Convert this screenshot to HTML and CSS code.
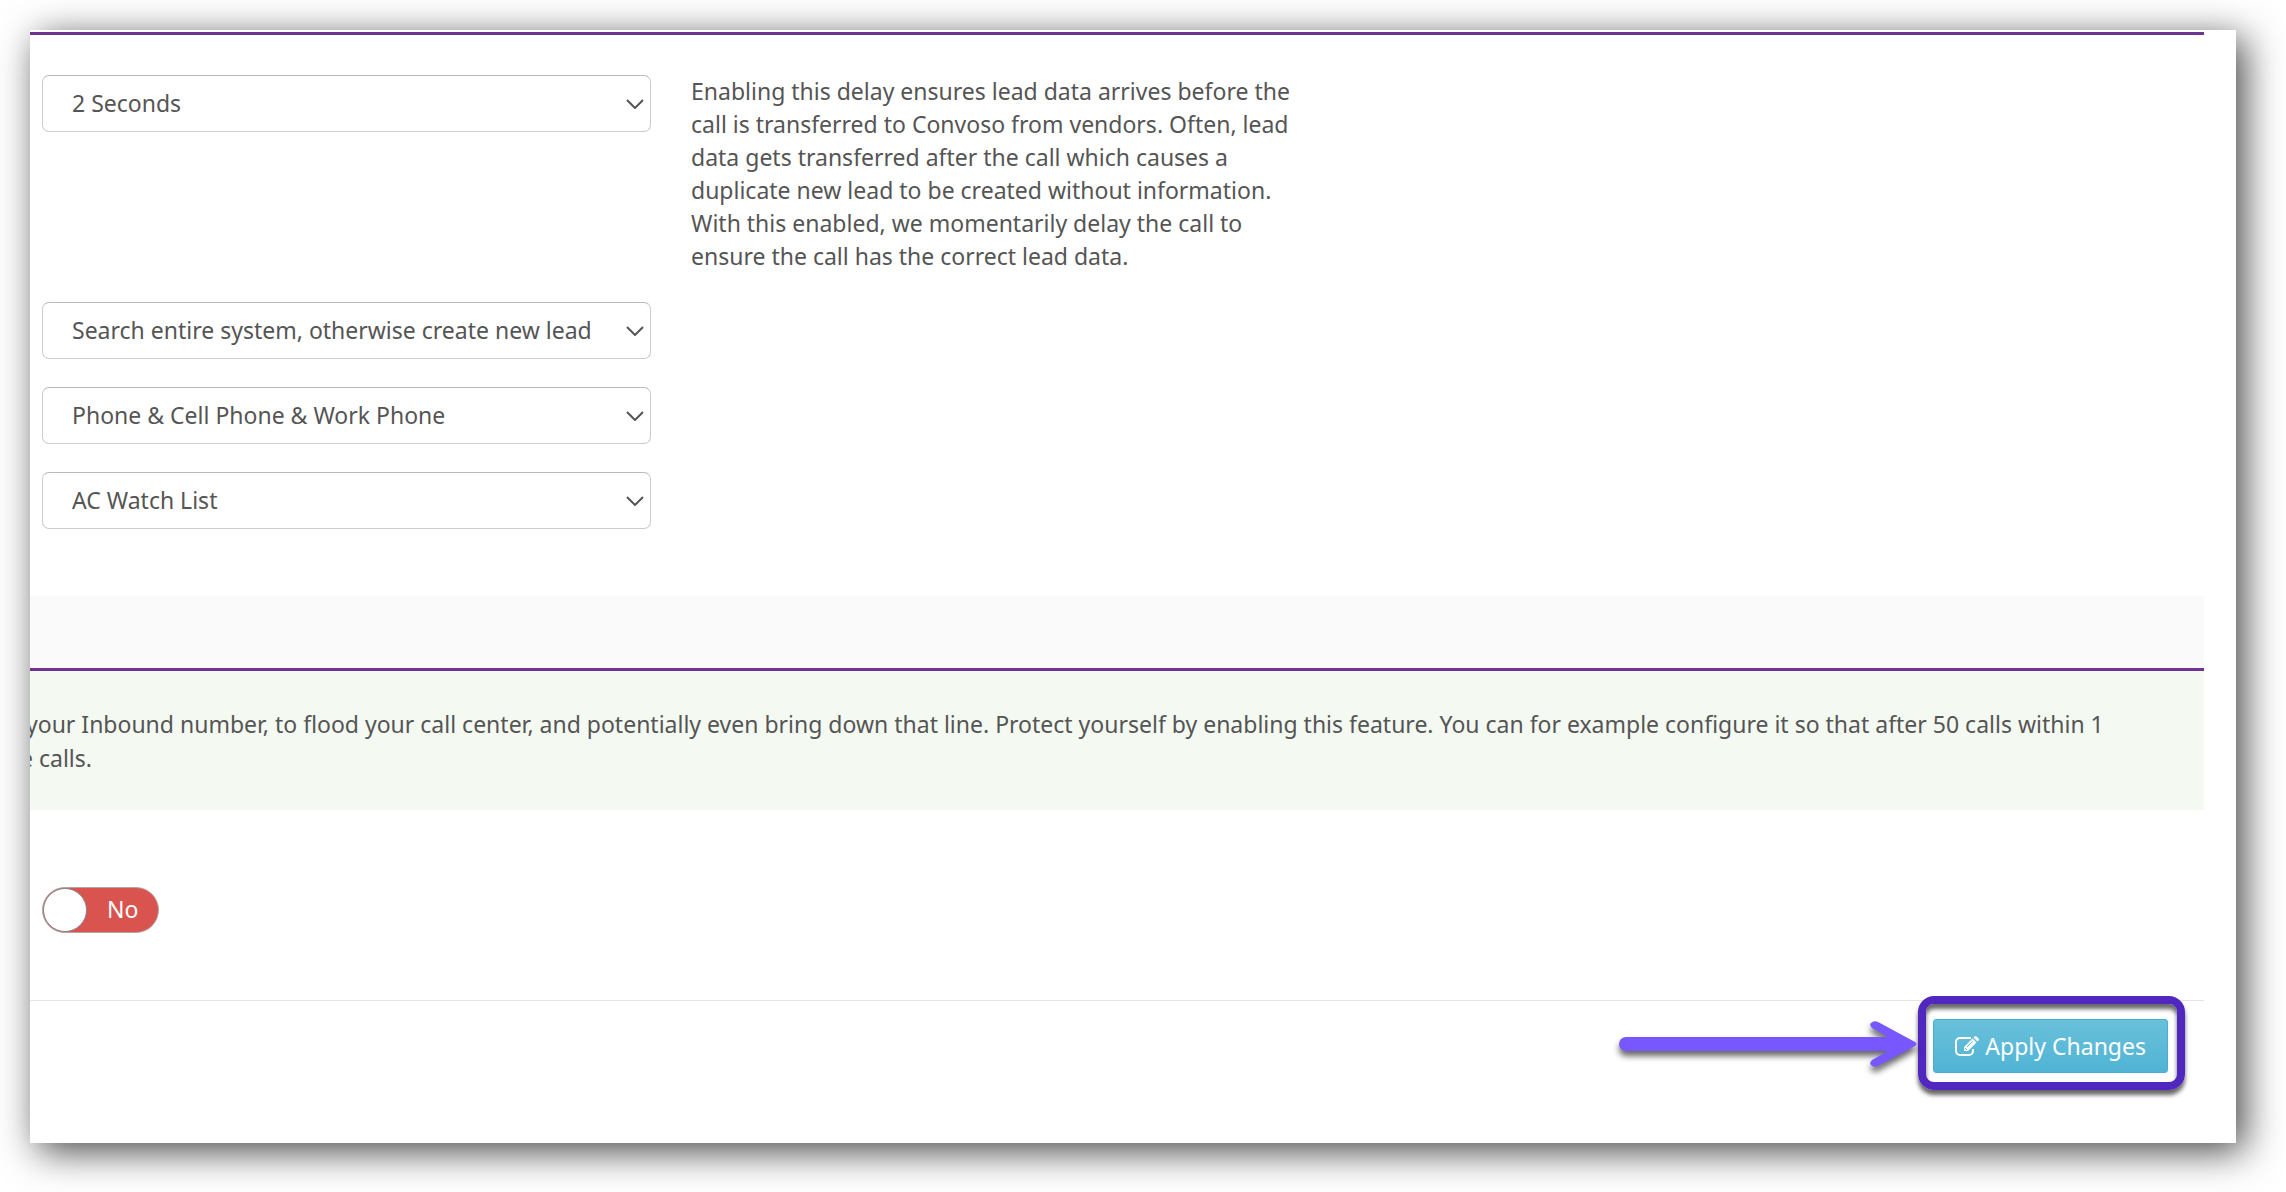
FILE: index.html
```html
<!DOCTYPE html>
<html lang="en">
<head>
    <meta charset="UTF-8">
    <meta name="viewport" content="width=device-width, initial-scale=1.0">
    <title>Inbound Settings</title>
    <link rel="stylesheet" href="styles.css">
</head>
<body>
    <form class="panel">
        <!-- Lead settings -->
        <section class="section settings">
            <div class="row">
                <div class="select-box">
                    <select class="select" aria-label="Call delay">
                        <option>2 Seconds</option>
                    </select>
                    <svg class="chevron" viewBox="0 0 18 10"><path d="M1 1l8 8 8-8"/></svg>
                </div>
                <p class="help">Enabling this delay ensures lead data arrives before the call is transferred to Convoso from vendors. Often, lead data gets transferred after the call which causes a duplicate new lead to be created without information. With this enabled, we momentarily delay the call to ensure the call has the correct lead data.</p>
            </div>
            <div class="row">
                <div class="select-box">
                    <select class="select" aria-label="Lead search">
                        <option>Search entire system, otherwise create new lead</option>
                    </select>
                    <svg class="chevron" viewBox="0 0 18 10"><path d="M1 1l8 8 8-8"/></svg>
                </div>
            </div>
            <div class="row">
                <div class="select-box">
                    <select class="select" aria-label="Phone fields">
                        <option>Phone &amp; Cell Phone &amp; Work Phone</option>
                    </select>
                    <svg class="chevron" viewBox="0 0 18 10"><path d="M1 1l8 8 8-8"/></svg>
                </div>
            </div>
            <div class="row">
                <div class="select-box">
                    <select class="select" aria-label="List">
                        <option>AC Watch List</option>
                    </select>
                    <svg class="chevron" viewBox="0 0 18 10"><path d="M1 1l8 8 8-8"/></svg>
                </div>
            </div>
        </section>

        <!-- Flood protection -->
        <div class="section-head"></div>
        <section class="section">
            <p class="notice">your Inbound number, to flood your call center, and potentially even bring down that line. Protect yourself by enabling this feature. You can for example configure it so that after 50 calls within 1<br>e calls.</p>
            <div class="toggle-row">
                <label class="toggle">
                    <input class="toggle-input" type="checkbox" aria-label="Flood protection">
                    <span class="knob"></span>
                    <span class="toggle-text">No</span>
                </label>
            </div>
        </section>

        <footer class="actions">
            <svg class="arrow" viewBox="0 0 300 48">
                <path d="M8 17H270L254 8Q251 5 253 3Q256 0 260 2L297 22Q300 24 297 26L260 46Q256 48 253 45Q251 43 254 40L270 31H8A7 7 0 0 1 8 17Z"/>
            </svg>
            <div class="highlight">
                <button class="btn" type="button">
                    <svg class="btn-icon" viewBox="0 0 24 20">
                        <path class="line" d="M16 2H5a4 4 0 0 0-4 4v9a4 4 0 0 0 4 4h9a4 4 0 0 0 4-4v-2"/>
                        <path d="M17.500 2.500l4 4L13 15H9v-4zM18.500 1.500l1-1q1-1 2 0l2 2q1 1 0 2l-1 1z"/>
                        <path class="detail" d="M12 11l5.500-5.500M10 12l2 2"/>
                    </svg>
                    Apply Changes
                </button>
            </div>
        </footer>
    </form>
</body>
</html>
```

FILE: styles.css
```css
* {
    box-sizing: border-box;
}

body {
    margin: 0;
    padding: 30px 50px 50px 30px;
    background: #fff;
    color: #555;
    font-family: "Noto Sans", "Open Sans", sans-serif;
    font-size: 23px;
    line-height: 33px;
}

p {
    margin: 0;
}

.panel {
    padding: 2px 32px 53px 0;
    overflow: hidden;
    background: #fff;
    box-shadow: 8px 8px 36px rgba(0, 0, 0, 0.73);
}

.section {
    border-top: 3px solid #6f3391;
}

.settings {
    display: flex;
    flex-direction: column;
    gap: 28px;
    padding: 40px 12px 67px;
}

.row {
    display: grid;
    grid-template-columns: minmax(0, 609px) minmax(0, 610px);
    gap: 40px;
    align-items: start;
}

.help {
    padding-bottom: 1px;
}

.select-box {
    position: relative;
}

.select {
    display: block;
    width: 100%;
    height: 57px;
    padding: 0 29px;
    border: 1px solid #ccc;
    border-top-color: #bbb;
    border-radius: 7px;
    background: #fff;
    color: #555;
    font: inherit;
    appearance: none;
}

.chevron {
    position: absolute;
    top: 24px;
    right: 7px;
    width: 18px;
    height: 10px;
    fill: none;
    stroke: #555;
    stroke-width: 2;
    pointer-events: none;
}

.section-head {
    height: 72px;
    background: #fafafa;
}

.notice {
    padding: 36px 0 35px;
    margin-left: -10px;
    text-indent: 6px;
    line-height: 34px;
    white-space: nowrap;
    background: #f4f9f2;
}

.toggle-row {
    padding: 77px 12px 67px;
}

.toggle {
    position: relative;
    display: flex;
    align-items: center;
    width: 117px;
    height: 46px;
    border: 1px solid #b5a5a5;
    border-radius: 23px;
    background: #d9534f;
    color: #fff;
    cursor: pointer;
}

.toggle-input {
    position: absolute;
    inset: 0;
    margin: 0;
    opacity: 0;
}

.knob {
    width: 44px;
    height: 44px;
    border: 1px solid #888;
    border-radius: 50%;
    background: #fff;
}

.toggle-text {
    flex: 1;
    padding: 0 0 2px 20px;
}

.actions {
    display: flex;
    justify-content: flex-end;
    align-items: center;
    border-top: 1px solid #e5e5e5;
    padding-right: 19px;
}

.arrow {
    width: 300px;
    height: 48px;
    margin-bottom: 3px;
    overflow: visible;
    fill: #7857ff;
    filter: drop-shadow(0 5px 3px rgba(0, 0, 0, 0.6));
}

.highlight {
    margin-top: -5px;
    padding: 15px 9px 9px 7px;
    border: 8px solid #5027bf;
    border-radius: 16px;
    box-shadow: 0 5px 4px rgba(0, 0, 0, 0.6), inset 0 5px 4px rgba(0, 0, 0, 0.6);
}

.btn {
    display: flex;
    align-items: center;
    gap: 6px;
    height: 54px;
    padding: 0 21px;
    border: 1px solid #46b0d0;
    border-radius: 3px;
    background: linear-gradient(#69c0da, #50b4d5);
    color: #fff;
    font: inherit;
    cursor: pointer;
}

.btn-icon {
    width: 24px;
    height: 20px;
    fill: #fff;
}

.btn-icon .line {
    fill: none;
    stroke: #fff;
    stroke-width: 2;
}

.btn-icon .detail {
    fill: none;
    stroke: #5bbad7;
    stroke-width: 1;
}
```
